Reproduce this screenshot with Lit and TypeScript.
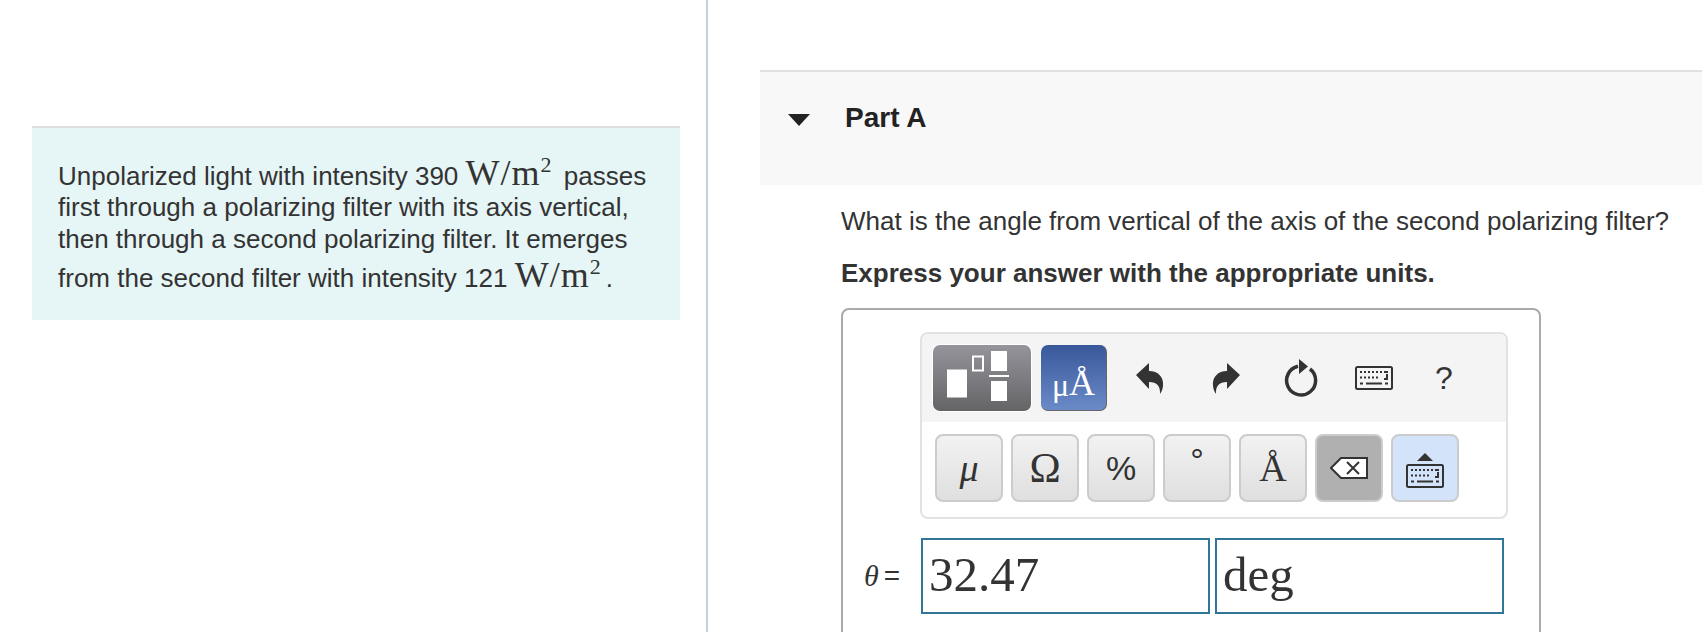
import { LitElement, html, css } from "lit";
import { customElement } from "lit/decorators.js";

const kbd = (w: number, h: number) => html`<svg class="kbd" width=${w} height=${h} viewBox="0 0 38 24">
  <rect x="1" y="1" width="36" height="22" rx="1.5" fill="none" stroke="#333" stroke-width="2"/>
  <path d="M5 6h2M9 6h2M13 6h2M17 6h2M21 6h2M25 6h2M29 6h4M5 11.500h2M9 11.500h2M13 11.500h2M17 11.500h2M21 11.500h2M32 8v5h-3M5 17.500h3M11 17.500h16M30 17.500h3" stroke="#333" stroke-width="2" fill="none"/>
</svg>`;

@customElement("app-root")
export class AppRoot extends LitElement {
  static styles = css`
    :host { display: flex; height: 632px; overflow: hidden; background: #fff; color: #333; font-family: "Liberation Sans", Arial, sans-serif; font-size: 26px; }
    .left { width: 708px; box-sizing: border-box; padding: 126px 26px 0 32px; border-right: 2px solid #c3d0df; flex: none; }
    .panel { background: #e6f5f5; border-top: 2px solid #dedede; height: 194px; box-sizing: border-box; padding: 29px 26px 0; line-height: 32px; white-space: nowrap; }
    .l1 { display: block; height: 34px; }
    .l4 { display: block; margin-top: 4px; }
    .math { font-family: "Liberation Serif", serif; font-size: 36px; letter-spacing: 1px; padding: 0 4px 0 0; }
    .math sup { font-size: 22px; line-height: 0; vertical-align: 13px; }
    .right { flex: 1; padding: 70px 0 0 52px; min-width: 0; }
    .head { display: flex; align-items: center; height: 113px; background: #f8f8f8; border-top: 2px solid #e0e0e0; padding: 0 0 0 28px; }
    .caret { width: 0; height: 0; border-left: 11px solid transparent; border-right: 11px solid transparent; border-top: 12px solid #222; margin: -18px 35px 0 0; }
    .part { font-weight: 700; font-size: 28px; color: #222; margin-top: -21px; }
    .body { padding-left: 81px; }
    .q { margin: 18px 0 0; line-height: 36px; white-space: nowrap; }
    .b { margin: 16px 0 0; line-height: 36px; font-weight: 700; white-space: nowrap; }
    .answer { margin-top: 17px; width: 700px; height: 400px; box-sizing: border-box; border: 2px solid #aaa; border-radius: 8px; padding: 22px 0 0 77px; }
    .tool { width: 588px; box-sizing: border-box; border: 2px solid #e2e2e2; border-radius: 8px; background: #fff; overflow: hidden; }
    .top { height: 88px; background: #f4f4f4; display: flex; align-items: center; padding-left: 11px; box-sizing: border-box; }
    .tpl { width: 98px; height: 66px; border-radius: 7px; background: linear-gradient(#96949c, #646466); display: block; box-shadow: 0 0 0 1px #fff; }
    .ua { width: 66px; height: 66px; margin-left: 10px; border-radius: 7px; background: linear-gradient(#38589a, #6b8ac8); color: #fff; font-family: "Liberation Serif", serif; display: flex; align-items: flex-end; justify-content: center; box-sizing: border-box; padding-bottom: 9px; border-right: 1px solid #666; border-bottom: 1px solid #666; }
    .ua span { font-size: 32px; line-height: 1; }
    .ua b { font-weight: 400; font-size: 36px; line-height: 1; }
    .ico { flex: none; display: block; }
    .i1 { margin-left: 29px; }
    .i2 { margin-left: 48px; }
    .i3 { margin-left: 44px; }
    .i4 { margin-left: 37px; height: 24px; }
    .i5 { margin-left: 42px; font-size: 32px; color: #333; line-height: 1; }
    .bottom { display: flex; gap: 8px; padding: 12px 0 15px 13px; }
    .k { width: 68px; height: 68px; box-sizing: border-box; border: 2px solid #ccc; border-radius: 8px; background: linear-gradient(#f2f2f2, #dfdfdf); display: flex; align-items: center; justify-content: center; font-family: "Liberation Serif", serif; color: #333; font-size: 38px; }
    .k.om { font-size: 42px; }
    .k.s { font-family: "Liberation Sans", sans-serif; font-size: 34px; }
    .k.it { font-style: italic; }
    .k.deg { align-items: flex-start; padding-top: 7px; line-height: 1; }
    .k.del { background: #b0b0b0; }
    .k.up { background: #d3e3fa; flex-direction: column; gap: 3px; padding-top: 5px; }
    .tri { width: 0; height: 0; border-left: 8px solid transparent; border-right: 8px solid transparent; border-bottom: 8px solid #333; }
    .row { display: flex; align-items: center; margin-top: 19px; margin-left: -56px; }
    .th { width: 57px; font-family: "Liberation Sans", sans-serif; font-size: 28px; white-space: nowrap; display: flex; align-items: center; gap: 5px; }
    .th i { font-family: "Liberation Serif", serif; font-size: 30px; }
    .in { width: 289px; height: 76px; box-sizing: border-box; border: 2px solid #337596; font-family: "Liberation Serif", serif; font-size: 49px; line-height: 70px; padding-left: 6px; color: #333; }
    .in + .in { margin-left: 5px; }
  `;

  render() {
    const wm = html`<span class="math">W/m<sup>2</sup></span>`;
    return html`
      <div class="left">
        <div class="panel">
          <span class="l1">Unpolarized light with intensity 390 ${wm} passes</span>
          first through a polarizing filter with its axis vertical,<br />
          then through a second polarizing filter. It emerges<br />
          <span class="l4">from the second filter with intensity 121 ${wm}.</span>
        </div>
      </div>
      <div class="right">
        <div class="head"><div class="caret"></div><div class="part">Part A</div></div>
        <div class="body">
          <p class="q">What is the angle from vertical of the axis of the second polarizing filter?</p>
          <p class="b">Express your answer with the appropriate units.</p>
          <div class="answer">
            <div class="tool">
              <div class="top">
                <svg class="tpl" viewBox="0 0 98 66">
                  <rect x="14" y="24.500" width="20" height="28" fill="#fff"/>
                  <rect x="40" y="11.500" width="10" height="14" fill="none" stroke="#fff" stroke-width="2"/>
                  <rect x="58" y="6" width="16" height="20" fill="#fff"/>
                  <rect x="56" y="30" width="20" height="2" fill="#fff"/>
                  <rect x="58" y="36" width="16" height="20" fill="#fff"/>
                </svg>
                <div class="ua"><span>μ</span><b>Å</b></div>
                <svg class="ico i1" width="28" height="32" viewBox="0 0 28 32"><path d="M0 13 13 1v8c9 0 15 6 14 15-.3 3-1.500 6-3 8 .5-8-3-12-11-12v7z" fill="#333"/></svg>
                <svg class="ico i2" width="28" height="32" viewBox="0 0 28 32"><path d="M28 13 15 1v8C6 9 0 15 1 24c.3 3 1.500 6 3 8-.5-8 3-12 11-12v7z" fill="#333"/></svg>
                <svg class="ico i3" width="34" height="38" viewBox="0 0 34 38"><path d="M14 7.300A14.500 14.500 0 1 0 26 10" fill="none" stroke="#333" stroke-width="3.500"/><path d="M15 0l9 7.500-9 7.500z" fill="#333"/></svg>
                <span class="ico i4">${kbd(38, 24)}</span>
                <span class="ico i5">?</span>
              </div>
              <div class="bottom">
                <div class="k it">μ</div>
                <div class="k om">Ω</div>
                <div class="k s">%</div>
                <div class="k s deg">°</div>
                <div class="k">Å</div>
                <div class="k del"><svg width="38" height="24" viewBox="0 0 38 24"><path d="M1 12 11 2h26v20H11z" fill="#fff" stroke="#333" stroke-width="2"/><path d="M17 6l12 12M29 6 17 18" stroke="#333" stroke-width="2"/></svg></div>
                <div class="k up"><div class="tri"></div>${kbd(38, 24)}</div>
              </div>
            </div>
            <div class="row">
              <div class="th"><i>θ</i><span>=</span></div>
              <div class="in">32.47</div>
              <div class="in">deg</div>
            </div>
          </div>
        </div>
      </div>
    `;
  }
}
